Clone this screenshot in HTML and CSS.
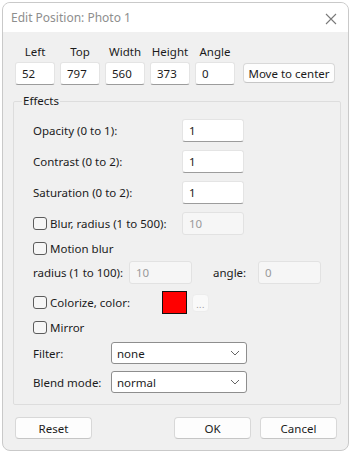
FILE: index.html
```html
<!DOCTYPE html>
<html>
<head>
    <title>Edit Position</title>
    <link rel="stylesheet" href="styles.css">
</head>
<body>
    <div class="window">
        <div class="titlebar">
            <span class="title">Edit Position: Photo 1</span>
            <svg class="close" width="12" height="12" viewBox="0 0 12 12">
                <path d="M1 1 L11 11 M11 1 L1 11" stroke="#7a7a7a" stroke-width="1.1" fill="none"/>
            </svg>
        </div>

        <div class="content">
            <div class="pos-row">
                <label class="pos-field"><span>Left</span><input class="field" value="52"></label>
                <label class="pos-field"><span>Top</span><input class="field" value="797"></label>
                <label class="pos-field"><span>Width</span><input class="field" value="560"></label>
                <label class="pos-field"><span>Height</span><input class="field" value="373"></label>
                <label class="pos-field"><span>Angle</span><input class="field" value="0"></label>
                <button class="btn btn-center">Move to center</button>
            </div>

            <fieldset class="effects">
                <legend>Effects</legend>

                <div class="row">
                    <span class="lbl">Opacity (0 to 1):</span>
                    <input class="field num" value="1">
                </div>
                <div class="row">
                    <span class="lbl">Contrast (0 to 2):</span>
                    <input class="field num" value="1">
                </div>
                <div class="row">
                    <span class="lbl">Saturation (0 to 2):</span>
                    <input class="field num" value="1">
                </div>
                <div class="row">
                    <label class="lbl check"><span class="box"></span>Blur, radius (1 to 500):</label>
                    <input class="field num" value="10" disabled>
                </div>
                <div class="row row-check">
                    <label class="check"><span class="box"></span>Motion blur</label>
                </div>
                <div class="row row-tight">
                    <span class="lbl lbl-radius">radius (1 to 100):</span>
                    <input class="field num" value="10" disabled>
                    <span class="lbl lbl-angle">angle:</span>
                    <input class="field num" value="0" disabled>
                </div>
                <div class="row row-color">
                    <label class="lbl lbl-color check"><span class="box"></span>Colorize, color:</label>
                    <span class="swatch"></span>
                    <button class="btn btn-dots">...</button>
                </div>
                <div class="row row-check">
                    <label class="check"><span class="box"></span>Mirror</label>
                </div>
                <div class="row row-select">
                    <span class="lbl lbl-select">Filter:</span>
                    <div class="select"><span>none</span>
                        <svg width="10" height="6" viewBox="0 0 10 6"><path d="M1 1 L5 5 L9 1" stroke="#666" stroke-width="1" fill="none"/></svg>
                    </div>
                </div>
                <div class="row row-select row-blend">
                    <span class="lbl lbl-select">Blend mode:</span>
                    <div class="select"><span>normal</span>
                        <svg width="10" height="6" viewBox="0 0 10 6"><path d="M1 1 L5 5 L9 1" stroke="#666" stroke-width="1" fill="none"/></svg>
                    </div>
                </div>
            </fieldset>

            <div class="footer">
                <button class="btn btn-foot">Reset</button>
                <span class="spacer"></span>
                <button class="btn btn-foot">OK</button>
                <button class="btn btn-foot">Cancel</button>
            </div>
        </div>
    </div>
</body>
</html>
```

FILE: styles.css
```css
body {
    margin: 0;
    padding: 0;
    background: #fff;
    font-family: "Noto Sans", sans-serif;
    font-size: 11.5px;
    color: #1b1b1b;
}
.window {
    margin: 2px 0 0 2px;
    width: 345px;
    height: 447px;
    border: 1px solid #c9c9c9;
    border-radius: 8px;
    background: #f0f0f0;
    overflow: hidden;
}
.titlebar {
    height: 29px;
    background: #fff;
    display: flex;
    align-items: center;
    padding: 0 11px 0 8px;
}
.title {
    flex: 1;
    color: #8e8e8e;
    font-size: 12px;
}
.close {
    margin-top: 2px;
}
.content {
    padding: 0 0 0 10px;
}
.pos-row {
    display: flex;
    padding: 12px 0 0 2px;
}
.pos-field {
    display: flex;
    flex-direction: column;
    align-items: center;
    width: 40px;
    margin-right: 5px;
}
.pos-field span {
    height: 16px;
    line-height: 16px;
    margin-bottom: 2px;
}
.field {
    box-sizing: border-box;
    width: 40px;
    height: 23px;
    border: 1px solid #e4e4e4;
    border-bottom-color: #9c9c9c;
    border-radius: 3px;
    background: #fff;
    font: inherit;
    color: #1b1b1b;
    padding: 0 6px;
    margin: 0;
    outline: none;
}
.field:disabled {
    background: #f6f6f6;
    border-color: #e2e2e2;
    color: #9a9a9a;
}
.btn {
    box-sizing: border-box;
    font: inherit;
    color: #1b1b1b;
    background: #fdfdfd;
    border: 1px solid #d8d8d8;
    border-bottom-color: #c6c6c6;
    border-radius: 4px;
    padding: 0;
    margin: 0;
}
.btn-center {
    align-self: flex-end;
    width: 92px;
    height: 20px;
    margin: 0 0 2px 3px;
}
.effects {
    box-sizing: border-box;
    width: 328px;
    margin: 8px 0 0 0;
    padding: 10px 0 11px 19px;
    border: 1px solid #dddddd;
    border-radius: 2px;
}
.effects legend {
    padding: 0 1px;
    margin-left: -11px;
    line-height: 16px;
}
.row {
    display: flex;
    align-items: center;
    height: 23px;
    margin-top: 8px;
}
.row:first-of-type {
    margin-top: 0;
}
.row-check {
    height: 14px;
    margin-top: 6px;
}
.row-tight {
    margin-top: 6px;
}
.row-color {
    margin-top: 7px;
}
.row-select {
    height: 22px;
}
.row-blend {
    margin-top: 7px;
}
.lbl {
    width: 149px;
    flex: none;
}
.num {
    width: 62px;
}
.check {
    display: flex;
    align-items: center;
}
.box {
    box-sizing: border-box;
    width: 14px;
    height: 13px;
    border: 1px solid #5c5c5c;
    border-radius: 3px;
    background: #f6f6f6;
    margin-right: 3px;
}
.lbl-radius {
    width: 96px;
}
.row-tight .num {
    width: 63px;
}
.lbl-angle {
    width: 45px;
    margin-left: 21px;
}
.lbl-color {
    width: 129px;
}
.swatch {
    box-sizing: border-box;
    width: 25px;
    height: 23px;
    border: 1px solid #111;
    background: #ff0000;
}
.btn-dots {
    width: 17px;
    height: 18px;
    margin-left: 5px;
    border-color: #ececec;
    color: #9a9a9a;
    font-size: 9px;
    line-height: 20px;
    letter-spacing: 0.5px;
    background: #f9f9f9;
}
.lbl-select {
    width: 78px;
}
.select {
    box-sizing: border-box;
    width: 136px;
    height: 22px;
    display: flex;
    align-items: center;
    justify-content: space-between;
    padding: 0 6px 0 5px;
    border: 1px solid #8e8e8e;
    border-radius: 3px;
    background: #fff;
}
.footer {
    display: flex;
    padding-left: 2px;
    margin-top: 12px;
    width: 322px;
}
.spacer {
    flex: 1;
}
.btn-foot {
    width: 77px;
    height: 22px;
}
.btn-foot + .btn-foot {
    margin-left: 9px;
}
```
